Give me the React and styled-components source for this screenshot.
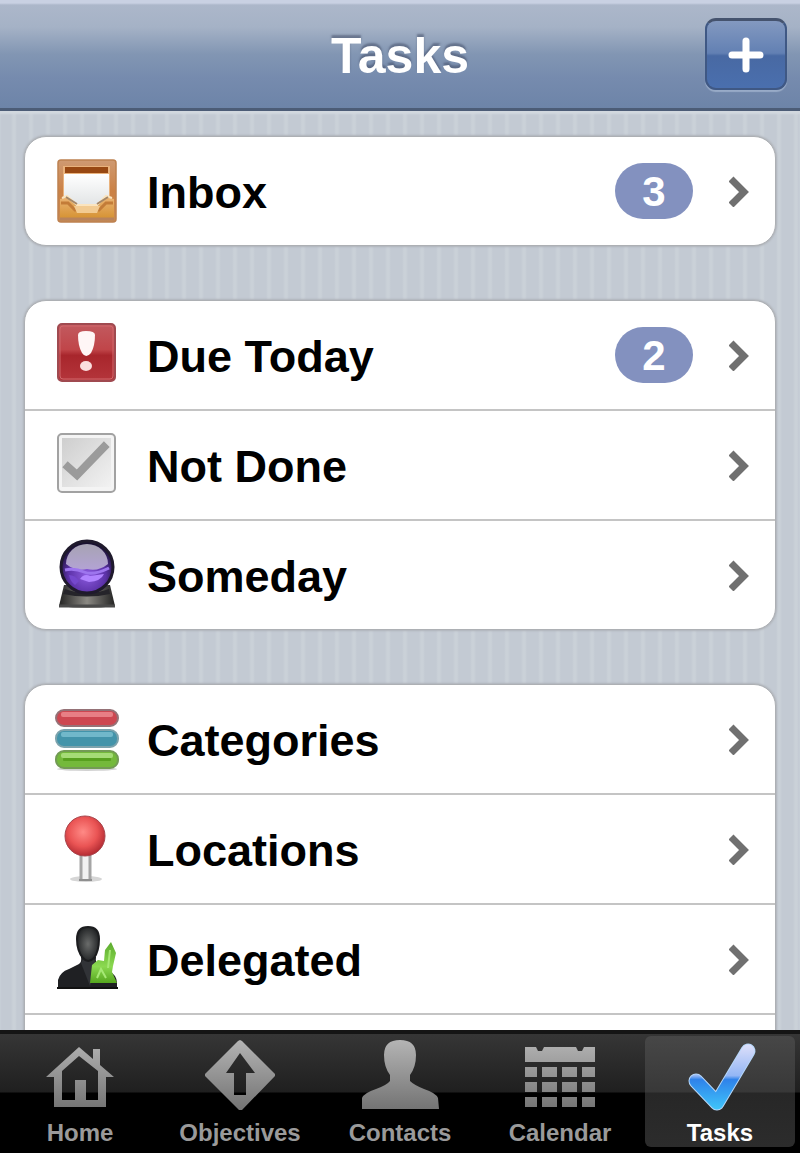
import { useState } from 'react';
import styled, { createGlobalStyle } from 'styled-components';

const GlobalStyle = createGlobalStyle`
  * {
    box-sizing: border-box;
  }
  body {
    margin: 0;
    font-family: 'Liberation Sans', Arial, Helvetica, sans-serif;
    font-weight: bold;
  }
`;

const InboxIcon = () => (
  <RowIcon viewBox="0 0 64 72" aria-hidden="true">
    <defs>
      <linearGradient id="wood" x1="0" y1="0" x2="0" y2="1">
        <stop offset="0" stopColor="#cf9a72" />
        <stop offset="0.5" stopColor="#cb8145" />
        <stop offset="1" stopColor="#c98a50" />
      </linearGradient>
      <linearGradient id="tray" x1="0" y1="0" x2="0" y2="1">
        <stop offset="0" stopColor="#eab475" />
        <stop offset="1" stopColor="#d69334" />
      </linearGradient>
      <linearGradient id="paper" x1="0" y1="0" x2="0" y2="1">
        <stop offset="0" stopColor="#ffffff" />
        <stop offset="1" stopColor="#dfe2e3" />
      </linearGradient>
    </defs>
    <rect x="3" y="5" width="58" height="62" rx="3" fill="url(#wood)" stroke="#bd8150" strokeWidth="1.5" />
    <rect x="8" y="11" width="47" height="38" fill="#e9b27c" />
    <rect x="10" y="12" width="43" height="6" fill="#984812" />
    <path d="M9 19H54V46L43 53H20L9 46Z" fill="url(#paper)" />
    <path d="M5 44L12 42L22 51H42L51 42L59 44V63H5Z" fill="url(#tray)" />
    <path d="M7 43L12 41L22 50H42L51 41L57 43" fill="none" stroke="#fbe4be" strokeWidth="2" />
    <path d="M11 42L22 49M53 42L42 49" fill="none" stroke="#a48768" strokeWidth="2" />
    <path d="M6 48H13L20 55H44L51 48H58" fill="none" stroke="#c37c38" strokeWidth="3" />
    <path d="M19 51H45L42 58H22Z" fill="#f2cb92" />
    <path d="M5 64H59" stroke="#b8835c" strokeWidth="3" />
  </RowIcon>
);

const DueIcon = () => (
  <RowIcon viewBox="0 0 64 72" aria-hidden="true">
    <defs>
      <linearGradient id="due" x1="0" y1="0" x2="0" y2="1">
        <stop offset="0" stopColor="#c25a5f" />
        <stop offset="0.45" stopColor="#c04549" />
        <stop offset="0.55" stopColor="#a8262c" />
        <stop offset="1" stopColor="#b5353b" />
      </linearGradient>
    </defs>
    <rect x="3" y="5" width="57" height="57" rx="4" fill="url(#due)" stroke="#a04a50" strokeWidth="2" />
    <rect x="5" y="7" width="53" height="53" rx="3" fill="none" stroke="#d0696d" strokeWidth="1" />
    <path d="M23 16Q23 12 31 12Q40 12 40 16Q40 27 36 34Q31 40 27 34Q23 27 23 16Z" fill="#fff6f6" />
    <ellipse cx="31" cy="47" rx="6" ry="5" fill="#fbdede" />
  </RowIcon>
);

const NotDoneIcon = () => (
  <RowIcon viewBox="0 0 64 72" aria-hidden="true">
    <defs>
      <linearGradient id="box" x1="0" y1="0" x2="1" y2="1">
        <stop offset="0" stopColor="#cecece" />
        <stop offset="1" stopColor="#f2f2f2" />
      </linearGradient>
    </defs>
    <rect x="3" y="5" width="57" height="58" rx="4" fill="#f4f4f4" stroke="#a2a2a2" strokeWidth="2" />
    <rect x="7" y="9" width="49" height="49" fill="url(#box)" />
    <path d="M13 38L22 46L49 18" fill="none" stroke="#9b9b9b" strokeWidth="8" strokeLinecap="square" />
  </RowIcon>
);

const SomedayIcon = () => (
  <RowIcon viewBox="0 0 64 72" aria-hidden="true">
    <defs>
      <radialGradient id="orb" cx="0.5" cy="0.65" r="0.6">
        <stop offset="0" stopColor="#8d5be0" />
        <stop offset="0.6" stopColor="#5c32a8" />
        <stop offset="1" stopColor="#191130" />
      </radialGradient>
      <linearGradient id="glass" x1="0" y1="0" x2="0" y2="1">
        <stop offset="0" stopColor="#a7a3b3" />
        <stop offset="1" stopColor="#b3a3d4" />
      </linearGradient>
      <linearGradient id="stand" x1="0" y1="0" x2="1" y2="0">
        <stop offset="0" stopColor="#232323" />
        <stop offset="0.5" stopColor="#8b8983" />
        <stop offset="1" stopColor="#232323" />
      </linearGradient>
    </defs>
    <path d="M9 46H55L60 67Q32 71 4 67Z" fill="url(#stand)" />
    <path d="M10 50Q32 58 54 50L55 55Q32 60 8 55Z" fill="#25242a" />
    <path d="M4 67H60" stroke="#4a4a4a" strokeWidth="3" />
    <circle cx="32" cy="28" r="26" fill="url(#orb)" stroke="#1f1a2c" strokeWidth="3" />
    <path d="M11 25A21 20 0 0 1 53 25Q43 33 32 30Q21 33 11 25Z" fill="url(#glass)" />
    <path d="M10 31Q20 29 29 33T54 29" fill="none" stroke="#9d75ee" strokeWidth="3" />
    <path d="M25 40Q29 34 35 37L49 35Q46 42 34 43Z" fill="#b083ff" />
    <path d="M14 36Q20 36 24 42L20 46Q15 42 14 36Z" fill="#7548cd" />
  </RowIcon>
);

const CategoriesIcon = () => (
  <RowIcon viewBox="0 0 64 72" aria-hidden="true">
    <ellipse cx="32" cy="66" rx="30" ry="2" fill="#d2d2d2" />
    <rect x="1" y="7" width="62" height="16" rx="8" fill="#cd4751" stroke="#957277" strokeWidth="2" />
    <rect x="6" y="9" width="52" height="5" rx="2" fill="#e87f85" />
    <rect x="1" y="27" width="62" height="17" rx="8" fill="#4394aa" stroke="#7ca3ad" strokeWidth="2" />
    <rect x="6" y="29" width="52" height="5" rx="2" fill="#71b8ca" />
    <rect x="1" y="48" width="62" height="17" rx="8" fill="#74b93b" stroke="#739b55" strokeWidth="2" />
    <rect x="6" y="50" width="52" height="5" rx="2" fill="#a5dc76" />
    <rect x="8" y="55" width="48" height="3" rx="1" fill="#58a11f" />
  </RowIcon>
);

const LocationsIcon = () => (
  <RowIcon viewBox="0 0 64 72" aria-hidden="true">
    <defs>
      <radialGradient id="pin" cx="0.45" cy="0.4" r="0.6">
        <stop offset="0" stopColor="#ff8a86" />
        <stop offset="0.6" stopColor="#ea5454" />
        <stop offset="1" stopColor="#b42c33" />
      </radialGradient>
    </defs>
    <ellipse cx="31" cy="66" rx="16" ry="3" fill="#d6d6d6" />
    <rect x="25" y="40" width="11" height="27" fill="#f1f1f1" />
    <path d="M26 42V66M35 42V66" stroke="#a5a5a5" strokeWidth="3" />
    <path d="M24 67H37" stroke="#8f8f8f" strokeWidth="2" />
    <circle cx="30" cy="23" r="20" fill="url(#pin)" stroke="#a8454c" strokeWidth="1" />
  </RowIcon>
);

const DelegatedIcon = () => (
  <RowIcon viewBox="0 0 64 72" aria-hidden="true">
    <defs>
      <radialGradient id="face" cx="0.5" cy="0.5" r="0.6">
        <stop offset="0" stopColor="#6a6c6b" />
        <stop offset="1" stopColor="#17191b" />
      </radialGradient>
      <linearGradient id="leaf" x1="0" y1="0" x2="0" y2="1">
        <stop offset="0" stopColor="#5cab2f" />
        <stop offset="0.6" stopColor="#8bd950" />
        <stop offset="1" stopColor="#55a61e" />
      </linearGradient>
    </defs>
    <path d="M3 65V57Q5 49 14 46L24 41Q27 39 26 34H41Q40 40 44 43L54 48Q62 52 62 60V65Z" fill="#1f2023" />
    <path d="M26 40L35 63L42 42L39 36H28Z" fill="#313337" />
    <path d="M33 4Q44 4 44 16Q44 28 39 35Q33 41 28 35Q22 28 22 16Q22 4 33 4Z" fill="url(#face)" stroke="#1c1d1f" strokeWidth="2" />
    <path d="M35 60L37 42L43 37L49 38L50 27L56 19L61 30L58 43L57 49L62 60Z" fill="url(#leaf)" />
    <path d="M42 55L46 46L51 55M55 27L53 45" fill="none" stroke="#a6e875" strokeWidth="2" />
    <path d="M2 65H63" stroke="#111111" strokeWidth="2" />
  </RowIcon>
);

const TabGradient = ({ id }) => (
  <defs>
    <linearGradient id={id} gradientUnits="userSpaceOnUse" x1="0" y1="3" x2="0" y2="72">
      <stop offset="0" stopColor="#b4b4b4" />
      <stop offset="1" stopColor="#747474" />
    </linearGradient>
  </defs>
);

const HomeIcon = () => (
  <TabIcon viewBox="0 0 80 82" aria-hidden="true">
    <TabGradient id="home" />
    <path
      fill="url(#home)"
      fillRule="evenodd"
      d="M39 10L53 22V12H60V28L74 40H66V70H14V40H6ZM39 19L22 34V63H35V43H46V63H58V34Z"
    />
  </TabIcon>
);

const ObjectivesIcon = () => (
  <TabIcon viewBox="0 0 80 82" aria-hidden="true">
    <TabGradient id="objectives" />
    <path
      fill="url(#objectives)"
      fillRule="evenodd"
      d="M40 3L42 4L75 37V39L42 73H39L5 39V37L38 4ZM40 16L26 36H34V58H46V36H55Z"
    />
  </TabIcon>
);

const ContactsIcon = () => (
  <TabIcon viewBox="0 0 80 82" aria-hidden="true">
    <TabGradient id="contacts" />
    <path
      fill="url(#contacts)"
      d="M40 3Q56 3 56 18Q56 30 50 38V44Q54 48 64 52Q76 56 78 61L79 72H2V61Q4 56 16 52Q27 48 30 44V38Q24 30 24 18Q24 3 40 3Z"
    />
  </TabIcon>
);

const columns = [
  [5, 12],
  [22, 15],
  [42, 15],
  [62, 13],
];

const CalendarIcon = () => (
  <TabIcon viewBox="0 0 80 82" aria-hidden="true">
    <TabGradient id="calendar" />
    <path fill="url(#calendar)" d="M5 10H16L18 14H22L24 10H56L58 14H62L64 10H75V25H5Z" />
    {[30, 45, 60].map((y) =>
      columns.map(([x, width]) => (
        <rect key={`${x}-${y}`} x={x} y={y} width={width} height="10" fill="url(#calendar)" />
      ))
    )}
  </TabIcon>
);

const TasksIcon = () => (
  <TabIcon viewBox="0 0 80 82" aria-hidden="true">
    <defs>
      <linearGradient id="tick" gradientUnits="userSpaceOnUse" x1="0" y1="8" x2="0" y2="72">
        <stop offset="0" stopColor="#dcdffa" />
        <stop offset="0.48" stopColor="#93b6f5" />
        <stop offset="0.54" stopColor="#2f82ea" />
        <stop offset="1" stopColor="#3fc4fa" />
      </linearGradient>
    </defs>
    <g fill="none" strokeLinecap="round" strokeLinejoin="round">
      <path d="M16 44L37 66L68 14" stroke="#b5d6f8" strokeWidth="15" />
      <path d="M16 44L37 66L68 14" stroke="url(#tick)" strokeWidth="13" />
    </g>
  </TabIcon>
);

const groups = [
  [{ label: 'Inbox', icon: InboxIcon, count: 3 }],
  [
    { label: 'Due Today', icon: DueIcon, count: 2 },
    { label: 'Not Done', icon: NotDoneIcon },
    { label: 'Someday', icon: SomedayIcon },
  ],
  [
    { label: 'Categories', icon: CategoriesIcon },
    { label: 'Locations', icon: LocationsIcon },
    { label: 'Delegated', icon: DelegatedIcon },
  ],
];

const tabs = [
  { label: 'Home', icon: HomeIcon },
  { label: 'Objectives', icon: ObjectivesIcon },
  { label: 'Contacts', icon: ContactsIcon },
  { label: 'Calendar', icon: CalendarIcon },
  { label: 'Tasks', icon: TasksIcon },
];

const TaskRow = ({ label, icon: Icon, count }) => (
  <Item>
    <RowLink href="#">
      <Icon />
      <RowLabel>{label}</RowLabel>
      {count && <Badge>{count}</Badge>}
      <Chevron viewBox="0 0 20 32" aria-hidden="true">
        <path d="M2 4L15 17L2 30" fill="none" stroke="#707070" strokeWidth="7" />
      </Chevron>
    </RowLink>
  </Item>
);

const App = () => {
  const [active, setActive] = useState('Tasks');
  return (
    <>
      <GlobalStyle />
      <Screen>
        <Header>
          <Title>Tasks</Title>
          <AddButton aria-label="Add task">
            <svg width="36" height="36" viewBox="0 0 36 36" aria-hidden="true">
              <path d="M18 4V32M4 18H32" stroke="#ffffff" strokeWidth="7" strokeLinecap="round" />
            </svg>
          </AddButton>
        </Header>
        <Content>
          {groups.map((rows, i) => (
            <Group key={i}>
              {rows.map((row) => (
                <TaskRow key={row.label} {...row} />
              ))}
              {/* the last list carries on under the tab bar */}
              {i === groups.length - 1 && <Item aria-hidden="true" />}
            </Group>
          ))}
        </Content>
        <TabBar>
          {tabs.map(({ label, icon: Icon }) => (
            <Tab key={label} $active={label === active} onClick={() => setActive(label)}>
              <Icon />
              {label}
            </Tab>
          ))}
        </TabBar>
      </Screen>
    </>
  );
};

export default App;

const Screen = styled.div`
  display: flex;
  flex-direction: column;
  height: 100vh;
  overflow: hidden;
`;

const Header = styled.header`
  display: grid;
  grid-template-columns: 1fr auto 1fr;
  align-items: center;
  flex-shrink: 0;
  height: 111px;
  padding: 0 13px;
  border-bottom: 3px solid #4c5c76;
  background: linear-gradient(#c9d1e3 0, #c9d1e3 3px, #acb7ca 5px, #a5b2c6 25%, #8296b3 50%, #768bae 72%, #6d84a8 100%);
`;

const Title = styled.h1`
  grid-column: 2;
  margin: 0;
  padding-top: 4px;
  color: #ffffff;
  font-size: 50px;
  line-height: 56px;
  text-shadow: 0 -3px 2px rgba(60, 70, 95, 0.5);
`;

const AddButton = styled.button`
  display: flex;
  justify-content: center;
  align-items: center;
  justify-self: end;
  width: 82px;
  height: 72px;
  padding: 0;
  border: 2px solid #3f5884;
  border-top: 3px solid #45536e;
  border-radius: 11px;
  background: linear-gradient(#8399c0 0, #6280b3 48%, #4869a3 52%, #4a6fae 100%);
  box-shadow: 0 2px 1px rgba(190, 205, 228, 0.5);
`;

const Content = styled.main`
  display: flex;
  flex: 1;
  flex-direction: column;
  gap: 54px;
  min-height: 0;
  padding: 25px 24px 0;
  overflow: hidden;
  background: repeating-linear-gradient(90deg, #c3cad3 0, #c3cad3 11px, #cad1d8 13px, #cad1d8 15px, #c3cad3 17px);
  box-shadow: inset 0 3px 2px #d2d8df;
`;

const Group = styled.ul`
  flex-shrink: 0;
  margin: 0;
  padding: 0;
  border: 1px solid #adb0b4;
  border-radius: 22px;
  background: #ffffff;
  box-shadow: 0 0 2px 1px #b0b4ba;
  list-style: none;
`;

const Item = styled.li`
  min-height: 108px;
  & + & {
    border-top: 2px solid #c4c4c4;
  }
`;

const RowLink = styled.a`
  display: flex;
  align-items: center;
  height: 108px;
  padding: 0 26px 0 30px;
  color: #000000;
  text-decoration: none;
`;

const RowIcon = styled.svg`
  flex-shrink: 0;
  width: 64px;
  height: 72px;
`;

const RowLabel = styled.span`
  flex: 1;
  padding-top: 3px;
  margin-left: 28px;
  font-size: 45px;
  line-height: 52px;
`;

const Badge = styled.span`
  width: 78px;
  padding-top: 2px;
  border-radius: 28px;
  background: #8391bf;
  color: #ffffff;
  font-size: 42px;
  line-height: 54px;
  text-align: center;
`;

const Chevron = styled.svg`
  flex-shrink: 0;
  width: 20px;
  height: 32px;
  margin-left: 36px;
`;

const TabBar = styled.nav`
  display: grid;
  grid-template-columns: repeat(5, 1fr);
  flex-shrink: 0;
  height: 123px;
  padding-bottom: 6px;
  border-top: 4px solid #151515;
  background: linear-gradient(#363636 0, #1f1f1f 58px, #000000 59px);
`;

const Tab = styled.button`
  display: flex;
  flex-direction: column;
  align-items: center;
  margin: 2px 5px 0;
  padding: 1px 0 0;
  border: 0;
  border-radius: 6px;
  background: ${({ $active }) =>
    $active ? 'linear-gradient(#474747 0, #383838 56px, #272727 57px, #2c2c2c 100%)' : 'none'};
  color: ${({ $active }) => ($active ? '#ffffff' : '#9a9a9a')};
  font-family: inherit;
  font-size: 24px;
  font-weight: bold;
  line-height: 28px;
`;

const TabIcon = styled.svg`
  flex-shrink: 0;
  width: 80px;
  height: 82px;
`;
